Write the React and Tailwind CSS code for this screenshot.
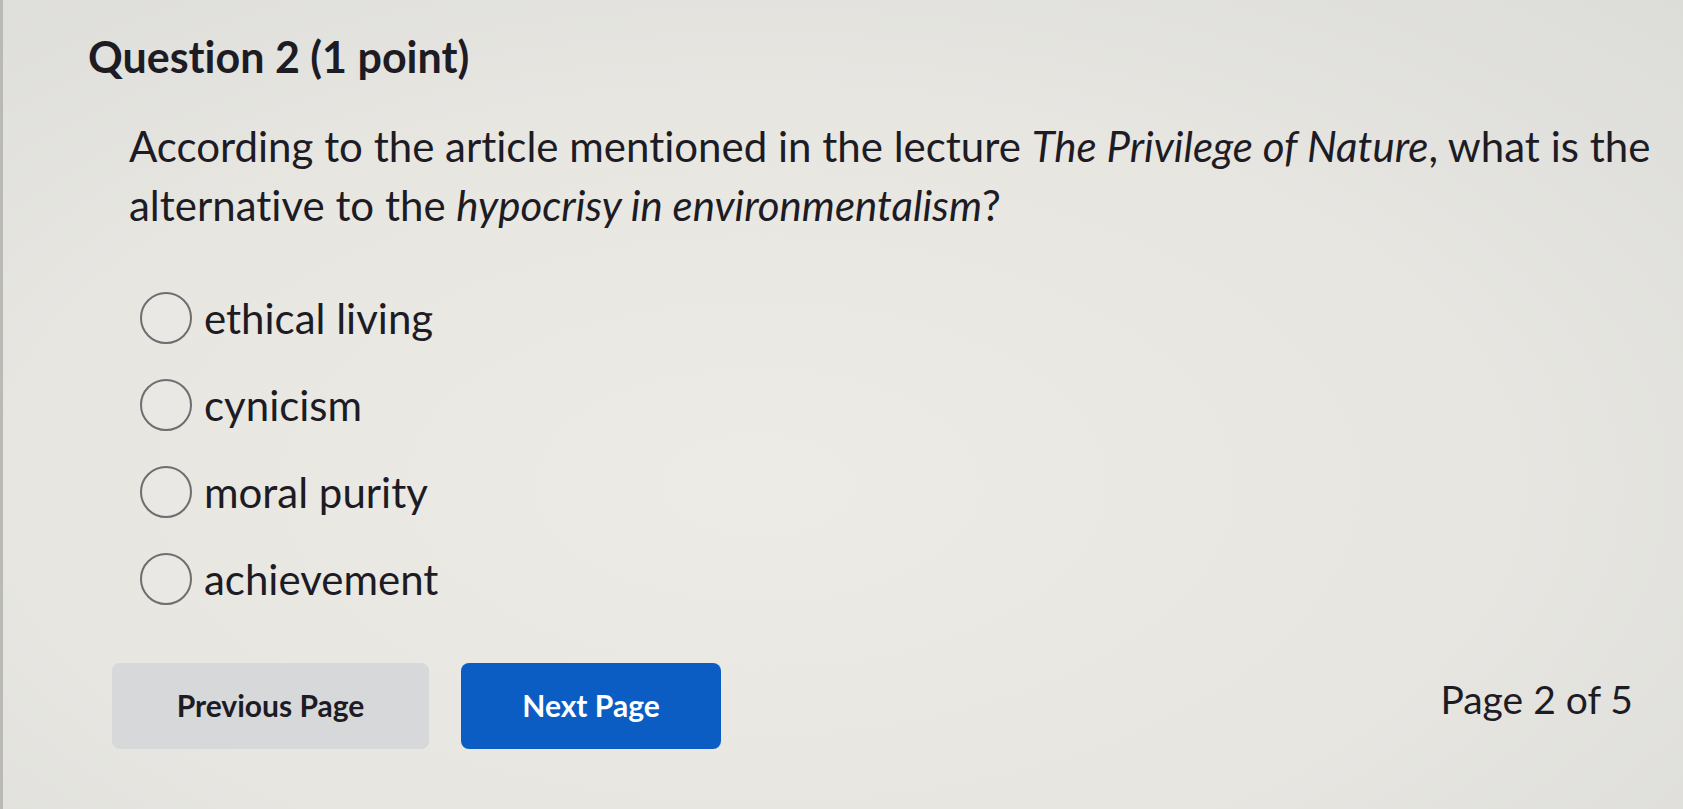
export default function App() {
  const options = ["ethical living", "cynicism", "moral purity", "achievement"];
  return (
    <div className="relative h-[809px] w-full overflow-hidden bg-[radial-gradient(ellipse_at_45%_60%,#ecebe6_0%,#e7e6e1_55%,#dcdcd9_100%)] font-['Lato','Noto_Sans',sans-serif] text-[#1d1b24] [font-variant-ligatures:none]">
      <div className="absolute left-0 top-0 h-full w-[3px] bg-[#b9b9b6]" />
      <div className="pl-[88px] pt-[31px]">
        <h1 className="text-[43px] font-bold leading-[1.2]">Question 2 (1 point)</h1>
      </div>
      <div className="mt-[34px] w-full pl-[129px] pr-[10px] text-[42px] leading-[59px]">
        According to the article mentioned in the lecture <i>The Privilege of Nature</i>, what is the alternative to the <i>hypocrisy in environmentalism</i>?
      </div>
      <div className="mt-[40px] flex flex-col pl-[140px]">
        {options.map((o) => (
          <label key={o} className="flex h-[87px] items-center gap-[12px]">
            <span className="h-[52px] w-[52px] shrink-0 rounded-full border-2 border-[#6e6e70] bg-[#e9e8e4]" />
            <span className="text-[42px] leading-none">{o}</span>
          </label>
        ))}
      </div>
      <div className="mt-[40px] flex items-center pl-[112px] pr-[50px]">
        <button className="flex h-[86px] w-[317px] items-center justify-center rounded-[8px] bg-[#d7d8d9] text-[30px] font-bold text-[#1d1b24]">
          Previous Page
        </button>
        <button className="ml-[32px] flex h-[86px] w-[260px] items-center justify-center rounded-[8px] bg-[#0b5dc3] text-[30px] font-bold text-white">
          Next Page
        </button>
        <div className="ml-auto -mt-[13px] text-[39px] leading-none">Page 2 of 5</div>
      </div>
    </div>
  );
}
